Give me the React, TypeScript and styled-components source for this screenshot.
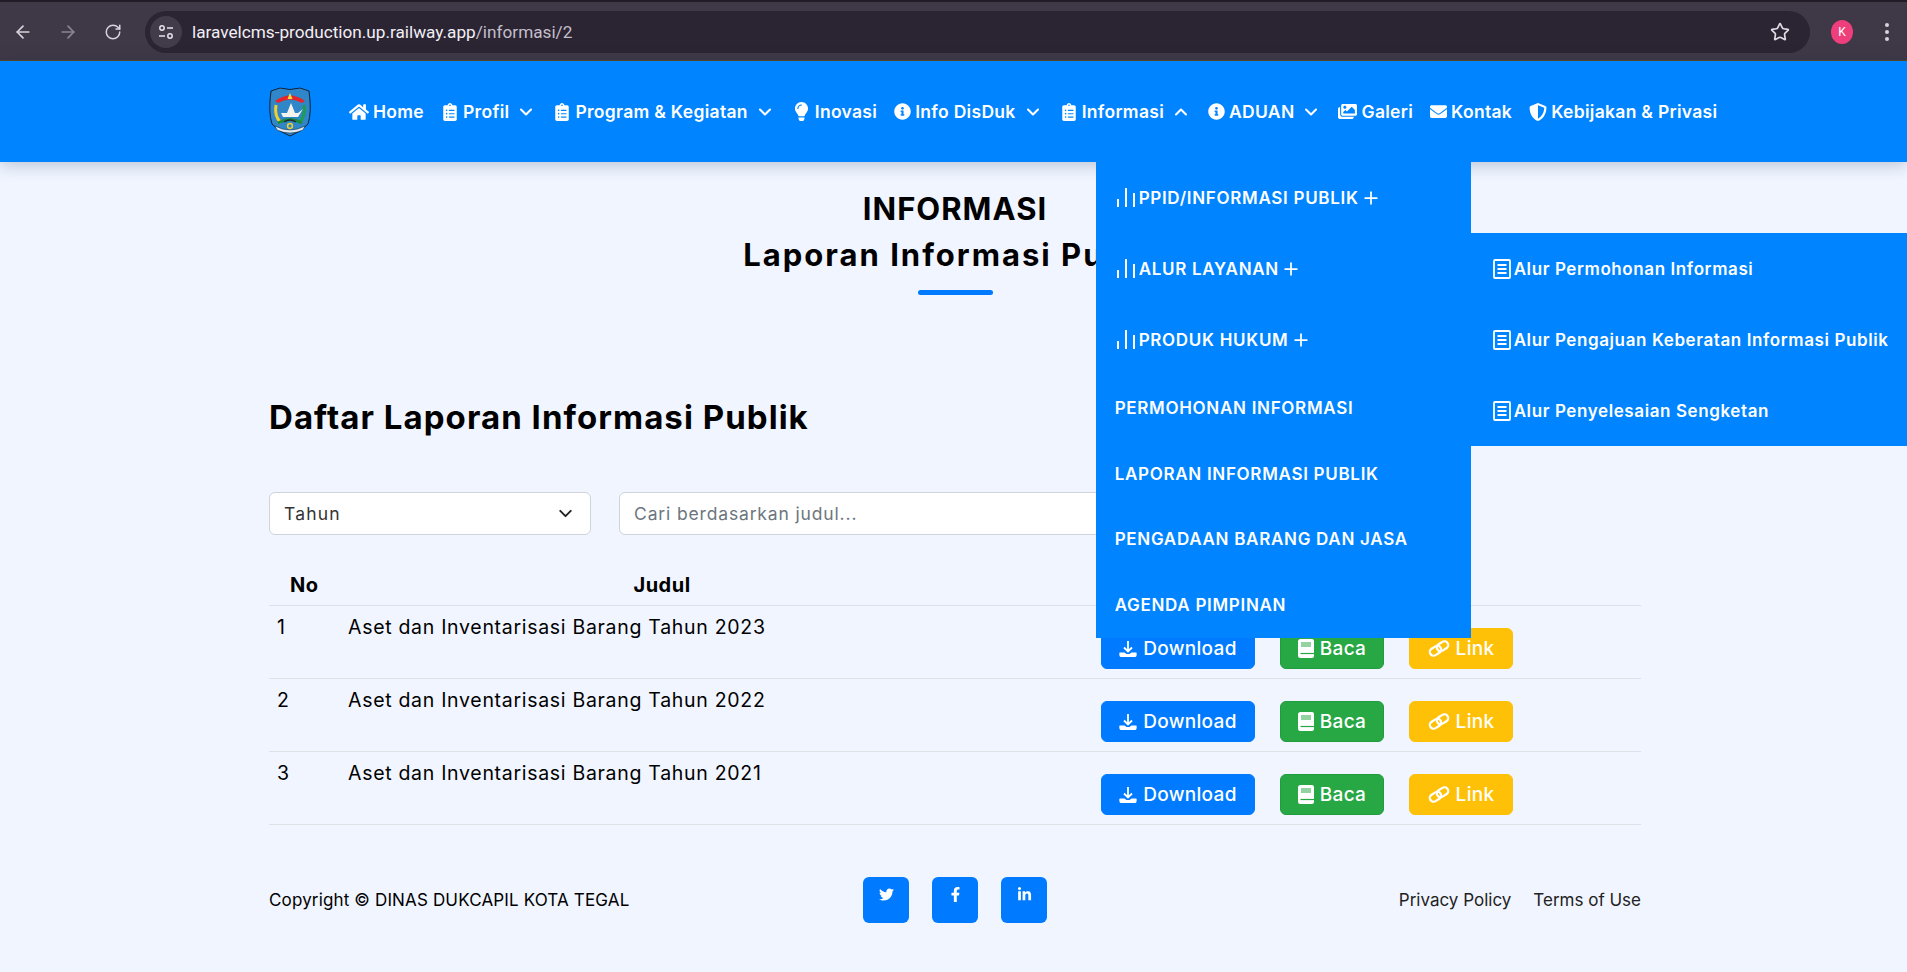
import React from "react";
import styled, { createGlobalStyle } from "styled-components";
import { ArrowLeft, ArrowRight, RotateCw, Star, ChevronDown, ChevronUp, Plus } from "lucide-react";
import { FaHome, FaClipboardList, FaLightbulb, FaInfoCircle, FaImages, FaEnvelope, FaShieldAlt, FaTwitter, FaFacebookF, FaLinkedinIn } from "react-icons/fa";

const Global = createGlobalStyle`
  html, body { margin: 0; padding: 0; background: #f0f5ff; }
  body { font-family: Inter, "Open Sans", sans-serif; color: #000; overflow: hidden; }
  * { box-sizing: border-box; }
`;

const Page = styled.div`
  width: 1907px;
  height: 972px;
  display: flex;
  flex-direction: column;
  overflow: hidden;
  background: #f0f5ff;
`;

const BrowserBar = styled.div`
  height: 61px;
  flex: none;
  display: flex;
  align-items: center;
  padding: 2px 0 0 0;
  background: #3f3846;
  border-top: 2px solid #211c28;
  border-bottom: 1px solid #5a4a20;
`;
const ChromeBtn = styled.span<{ $dim?: boolean }>`
  width: 45px;
  flex: none;
  display: flex;
  justify-content: center;
  color: ${(p) => (p.$dim ? "#8b8592" : "#d8d3dc")};
`;
const AddressBar = styled.div`
  margin-left: 10px;
  width: 1665px;
  height: 42px;
  border-radius: 21px;
  background: #2b2533;
  display: flex;
  align-items: center;
  padding: 0 5px;
  flex: none;
`;
const TuneWrap = styled.span`
  width: 32px;
  height: 32px;
  border-radius: 50%;
  background: #423b4a;
  display: flex;
  align-items: center;
  justify-content: center;
  flex: none;
`;
const Url = styled.span`
  margin-left: 10px;
  flex: 1;
  font: 17.2px "Roboto", "Liberation Sans", sans-serif;
  color: #f2eff5;
  em { font-style: normal; color: #c4bfca; }
`;
const StarWrap = styled.span`
  margin-right: 15px;
  display: flex;
  color: #e0dce4;
`;
const Avatar = styled.span`
  margin-left: 21px;
  width: 22px;
  height: 24px;
  border-radius: 50%;
  background: #ee3f7c;
  color: #fff;
  font: 12px "Roboto", sans-serif;
  display: flex;
  align-items: center;
  justify-content: center;
  flex: none;
`;
const Dots = styled.span`
  margin-left: 32px;
  display: flex;
  flex-direction: column;
  gap: 3px;
  i { width: 4px; height: 4px; border-radius: 50%; background: #d8d3dc; display: block; }
`;

const Nav = styled.nav`
  height: 101px;
  flex: none;
  background: #0084ff;
  display: flex;
  align-items: center;
  padding-left: 267px;
  position: relative;
  z-index: 5;
  box-shadow: 0 2px 16px rgba(30, 50, 90, 0.28);
`;
const Logo = styled.svg`
  width: 46px;
  height: 52px;
  flex: none;
  margin-right: 36px;
`;
const NavItems = styled.div`
  display: flex;
  align-items: center;
  gap: 17px;
`;
const NavItem = styled.div`
  position: relative;
  display: flex;
  align-items: center;
  gap: 4px;
  color: #fff;
  font-size: 17.5px;
  font-weight: 600;
  white-space: nowrap;
  height: 101px;
  letter-spacing: 0.3px;
  > svg:first-child { flex: none; }
`;
const Caret = styled.span`
  display: flex;
  margin-left: 3px;
`;

const Dropdown = styled.div`
  position: absolute;
  top: 101px;
  left: 36px;
  width: 375px;
  height: 476px;
  background: #0084ff;
  padding-top: 1px;
  display: flex;
  flex-direction: column;
`;
const DropRow = styled.div<{ $h: number }>`
  height: ${(p) => p.$h}px;
  padding-left: 19px;
  display: flex;
  align-items: center;
  gap: 2px;
  font-size: 17px;
  font-weight: 600;
  letter-spacing: 0.7px;
  color: #fff;
`;
const Submenu = styled.div`
  position: absolute;
  top: 71px;
  left: 375px;
  width: 436px;
  height: 213px;
  background: #0084ff;
  display: flex;
  flex-direction: column;
  justify-content: center;
`;
const SubRow = styled.div`
  height: 71px;
  padding-left: 21px;
  display: flex;
  align-items: center;
  gap: 2px;
  font-size: 17px;
  font-weight: 600;
  letter-spacing: 0.6px;
  color: #fff;
`;

const Main = styled.main`
  width: 1372px;
  margin-left: 269px;
  display: flex;
  flex-direction: column;
`;
const TitleBlock = styled.div`
  width: 1372px;
  margin-top: 24px;
  display: flex;
  flex-direction: column;
  align-items: center;
`;
const Title = styled.h1<{ $ls: number }>`
  margin: 0;
  font-size: 31px;
  line-height: 46px;
  font-weight: 700;
  letter-spacing: ${(p) => p.$ls}px;
  text-align: center;
`;
const TitleBar = styled.div`
  margin-top: 12px;
  width: 75px;
  height: 5px;
  border-radius: 3px;
  background: #007bff;
`;
const Heading = styled.h2`
  margin: 99px 0 0;
  font-size: 33px;
  line-height: 46px;
  font-weight: 700;
  letter-spacing: 1.05px;
`;
const Filters = styled.div`
  margin-top: 52px;
  display: flex;
  gap: 28px;
`;
const SelectBox = styled.div`
  width: 322px;
  height: 43px;
  background: #fff;
  border: 1px solid #ced4da;
  border-radius: 6px;
  display: flex;
  align-items: center;
  justify-content: space-between;
  padding: 0 14px 0 14px;
  font-size: 17.5px;
  color: #333;
  letter-spacing: 1.2px;
`;
const SearchBox = styled.div`
  width: 760px;
  height: 43px;
  background: #fff;
  border: 1px solid #ced4da;
  border-radius: 6px;
  display: flex;
  align-items: center;
  padding: 0 14px;
  font-size: 17.5px;
  color: #6c757d;
  letter-spacing: 0.85px;
`;
const Table = styled.div`
  margin-top: 29px;
  display: flex;
  flex-direction: column;
`;
const HeadRow = styled.div`
  height: 42px;
  display: grid;
  grid-template-columns: 71px 1fr;
  align-items: center;
  border-bottom: 1px solid #dee2e6;
  font-size: 20px;
  font-weight: 700;
  letter-spacing: 0.5px;
`;
const HeadNo = styled.span`
  padding-left: 21px;
`;
const HeadJudul = styled.span`
  width: 644px;
  text-align: center;
`;
const Row = styled.div`
  height: 73px;
  display: grid;
  grid-template-columns: 71px 761px 1fr;
  border-bottom: 1px solid #dee2e6;
  font-size: 19.5px;
  letter-spacing: 0.7px;
`;
const Cell = styled.div<{ $pl?: number }>`
  padding: 9px 0 0 ${(p) => p.$pl ?? 0}px;
  line-height: 24px;
`;
const Actions = styled.div`
  display: flex;
  align-items: center;
  gap: 25px;
  padding: 13px 0 0;
`;
const ActionBtn = styled.div<{ $bg: string; $w: number; $border: string }>`
  width: ${(p) => p.$w}px;
  height: 41px;
  border-radius: 6px;
  background: ${(p) => p.$bg};
  border: 1px solid ${(p) => p.$border};
  color: #fff;
  font-size: 19px;
  font-weight: 500;
  letter-spacing: 0.3px;
  display: flex;
  align-items: center;
  justify-content: center;
  gap: 6px;
`;
const Footer = styled.footer`
  margin-top: 52px;
  display: grid;
  grid-template-columns: 594px auto 1fr;
  align-items: center;
  font-size: 17px;
  letter-spacing: 0.15px;
`;
const Socials = styled.div`
  display: flex;
  gap: 23px;
`;
const Social = styled.div`
  width: 46px;
  height: 46px;
  border-radius: 6px;
  background: #007bff;
  color: #fff;
  display: flex;
  justify-content: center;
  padding-top: 10px;
`;
const FooterLinks = styled.div`
  display: flex;
  justify-content: flex-end;
  gap: 22px;
  color: #222;
  letter-spacing: 0;
`;

const Bars = () => (
  <svg width="22" height="22" viewBox="0 0 22 22" stroke="#fff" strokeWidth="2" fill="none">
    <path d="M3 20V12M11 20V1M19 20V6" />
  </svg>
);
const DocIcon = () => (
  <svg width="20" height="20" viewBox="0 0 20 20" stroke="#fff" fill="none">
    <rect x="2" y="1" width="16" height="18" rx="1" strokeWidth="1.8" />
    <path d="M5.500 6h9M5.500 10h9M5.500 14h9" strokeWidth="2" />
  </svg>
);
const TuneIcon = () => (
  <svg width="18" height="18" viewBox="0 0 18 18" stroke="#e6e2ea" strokeWidth="1.5" fill="none">
    <circle cx="5" cy="5" r="2.2" />
    <path d="M10 5h6M2 13h6" />
    <circle cx="13" cy="13" r="2.2" />
  </svg>
);
const DownloadIcon = () => (
  <svg width="18" height="18" viewBox="0 0 18 18" fill="none">
    <path d="M9 1v10M5 7.500l4 4 4-4" stroke="#fff" strokeWidth="1.8" />
    <path d="M1 12.500h4.500l2 1.500h3l2-1.500H17c.5 0 .7.5.7 1.500 0 2-.5 3-1.500 3H1.800c-1 0-1.500-1-1.500-3 0-1 .2-1.500.7-1.500z" fill="#fff" />
  </svg>
);
const BookIcon = () => (
  <svg width="16" height="19" viewBox="0 0 16 19" fill="none">
    <path d="M2.500 0H14a2 2 0 0 1 2 2v15a2 2 0 0 1-2 2H2.500A2.500 2.500 0 0 1 0 16.500v-14A2.500 2.500 0 0 1 2.500 0z" fill="#fff" />
    <rect x="3" y="3" width="10" height="5" fill="#28a745" opacity=".5" />
    <path d="M2.500 14.500H16" stroke="#28a745" strokeWidth="1.200" />
  </svg>
);
const LinkIcon = () => (
  <svg width="22" height="17" viewBox="0 0 22 17" fill="none" stroke="#fff" strokeWidth="2.200">
    <rect x="1.500" y="7" width="12" height="7.500" rx="3.750" transform="rotate(-32 7.500 10.750)" />
    <rect x="8.500" y="2.500" width="12" height="7.500" rx="3.750" transform="rotate(-32 14.500 6.250)" />
  </svg>
);

const menu = ["PPID/INFORMASI PUBLIK", "ALUR LAYANAN", "PRODUK HUKUM"];
const plain = ["PERMOHONAN INFORMASI", "LAPORAN INFORMASI PUBLIK", "PENGADAAN BARANG DAN JASA", "AGENDA PIMPINAN"];
const sub = ["Alur Permohonan Informasi", "Alur Pengajuan Keberatan Informasi Publik", "Alur Penyelesaian Sengketan"];
const rows = ["2023", "2022", "2021"];

export default function App() {
  return (
    <Page>
      <Global />
      <BrowserBar>
        <ChromeBtn><ArrowLeft size={20} /></ChromeBtn>
        <ChromeBtn $dim><ArrowRight size={20} /></ChromeBtn>
        <ChromeBtn><RotateCw size={18} /></ChromeBtn>
        <AddressBar>
          <TuneWrap><TuneIcon /></TuneWrap>
          <Url>laravelcms-production.up.railway.app<em>/informasi/2</em></Url>
          <StarWrap><Star size={20} /></StarWrap>
        </AddressBar>
        <Avatar>K</Avatar>
        <Dots><i /><i /><i /></Dots>
      </BrowserBar>
      <Nav>
        <Logo viewBox="0 0 46 52">
          <path d="M4 5 L13 2 Q23 5 33 2 L42 5 Q45 26 41 38 Q34 46 23 50 Q12 46 5 38 Q1 26 4 5Z" fill="#2f86c8" stroke="#123" strokeWidth="1" />
          <path d="M8 15 Q23 4 38 15 L35 17 Q23 10 11 17Z" fill="#e3262a" />
          <path d="M23 7l2.500 6h-5z" fill="#ffd93b" />
          <path d="M14 27 L31 27 L36 23 L31 31 L16 31Z M20 27 L24 17 L28 27Z" fill="#f4f4ee" />
          <path d="M9 19 Q7 30 14 37" stroke="#f2cf2d" strokeWidth="3" fill="none" />
          <path d="M37 19 Q39 30 32 37" stroke="#1f9d4a" strokeWidth="3" fill="none" />
          <path d="M11 37 Q23 30 35 37" stroke="#1b8a3f" strokeWidth="3" fill="none" />
          <path d="M17 36 Q23 32 29 36" stroke="#1d2a33" strokeWidth="1.500" fill="none" />
          <path d="M8 40 Q23 48 38 40 L36 44 Q23 50 10 44Z" fill="#dfe9ef" stroke="#123" strokeWidth=".5" />
          <circle cx="23" cy="40" r="2.400" fill="none" stroke="#f2cf2d" strokeWidth="1.500" />
        </Logo>
        <NavItems>
          <NavItem><FaHome size={20} />Home</NavItem>
          <NavItem><FaClipboardList size={18} />Profil<Caret><ChevronDown size={20} strokeWidth={2.5} /></Caret></NavItem>
          <NavItem><FaClipboardList size={18} />Program &amp; Kegiatan<Caret><ChevronDown size={20} strokeWidth={2.5} /></Caret></NavItem>
          <NavItem><FaLightbulb size={19} />Inovasi</NavItem>
          <NavItem><FaInfoCircle size={17} />Info DisDuk<Caret><ChevronDown size={20} strokeWidth={2.5} /></Caret></NavItem>
          <NavItem>
            <FaClipboardList size={18} />Informasi<Caret><ChevronUp size={20} strokeWidth={2.5} /></Caret>
            <Dropdown>
              {menu.map((m) => (
                <DropRow key={m} $h={71}><Bars />{m}<Plus size={20} strokeWidth={2.1} /></DropRow>
              ))}
              {plain.map((m) => (
                <DropRow key={m} $h={66}>{m}</DropRow>
              ))}
              <Submenu>
                {sub.map((s) => (
                  <SubRow key={s}><DocIcon />{s}</SubRow>
                ))}
              </Submenu>
            </Dropdown>
          </NavItem>
          <NavItem><FaInfoCircle size={17} />ADUAN<Caret><ChevronDown size={20} strokeWidth={2.5} /></Caret></NavItem>
          <NavItem><FaImages size={19} />Galeri</NavItem>
          <NavItem><FaEnvelope size={17} />Kontak</NavItem>
          <NavItem><FaShieldAlt size={18} />Kebijakan &amp; Privasi</NavItem>
        </NavItems>
      </Nav>
      <Main>
        <TitleBlock>
          <Title $ls={1}>INFORMASI</Title>
          <Title $ls={2}>Laporan Informasi Publik</Title>
          <TitleBar />
        </TitleBlock>
        <Heading>Daftar Laporan Informasi Publik</Heading>
        <Filters>
          <SelectBox>Tahun<ChevronDown size={21} color="#222" strokeWidth={2.2} /></SelectBox>
          <SearchBox>Cari berdasarkan judul...</SearchBox>
        </Filters>
        <Table>
          <HeadRow><HeadNo>No</HeadNo><HeadJudul>Judul</HeadJudul></HeadRow>
          {rows.map((y, i) => (
            <Row key={y}>
              <Cell $pl={8}>{i + 1}</Cell>
              <Cell $pl={8}>Aset dan Inventarisasi Barang Tahun {y}</Cell>
              <Actions>
                <ActionBtn $bg="#007bff" $border="#007bff" $w={154}><DownloadIcon />Download</ActionBtn>
                <ActionBtn $bg="#28a745" $border="#1f9c3d" $w={104}><BookIcon />Baca</ActionBtn>
                <ActionBtn $bg="#ffc107" $border="#ffc107" $w={104}><LinkIcon />Link</ActionBtn>
              </Actions>
            </Row>
          ))}
        </Table>
        <Footer>
          <span>Copyright © DINAS DUKCAPIL KOTA TEGAL</span>
          <Socials>
            <Social><FaTwitter size={15} /></Social>
            <Social><FaFacebookF size={15} /></Social>
            <Social><FaLinkedinIn size={15} /></Social>
          </Socials>
          <FooterLinks><span>Privacy Policy</span><span>Terms of Use</span></FooterLinks>
        </Footer>
      </Main>
    </Page>
  );
}
